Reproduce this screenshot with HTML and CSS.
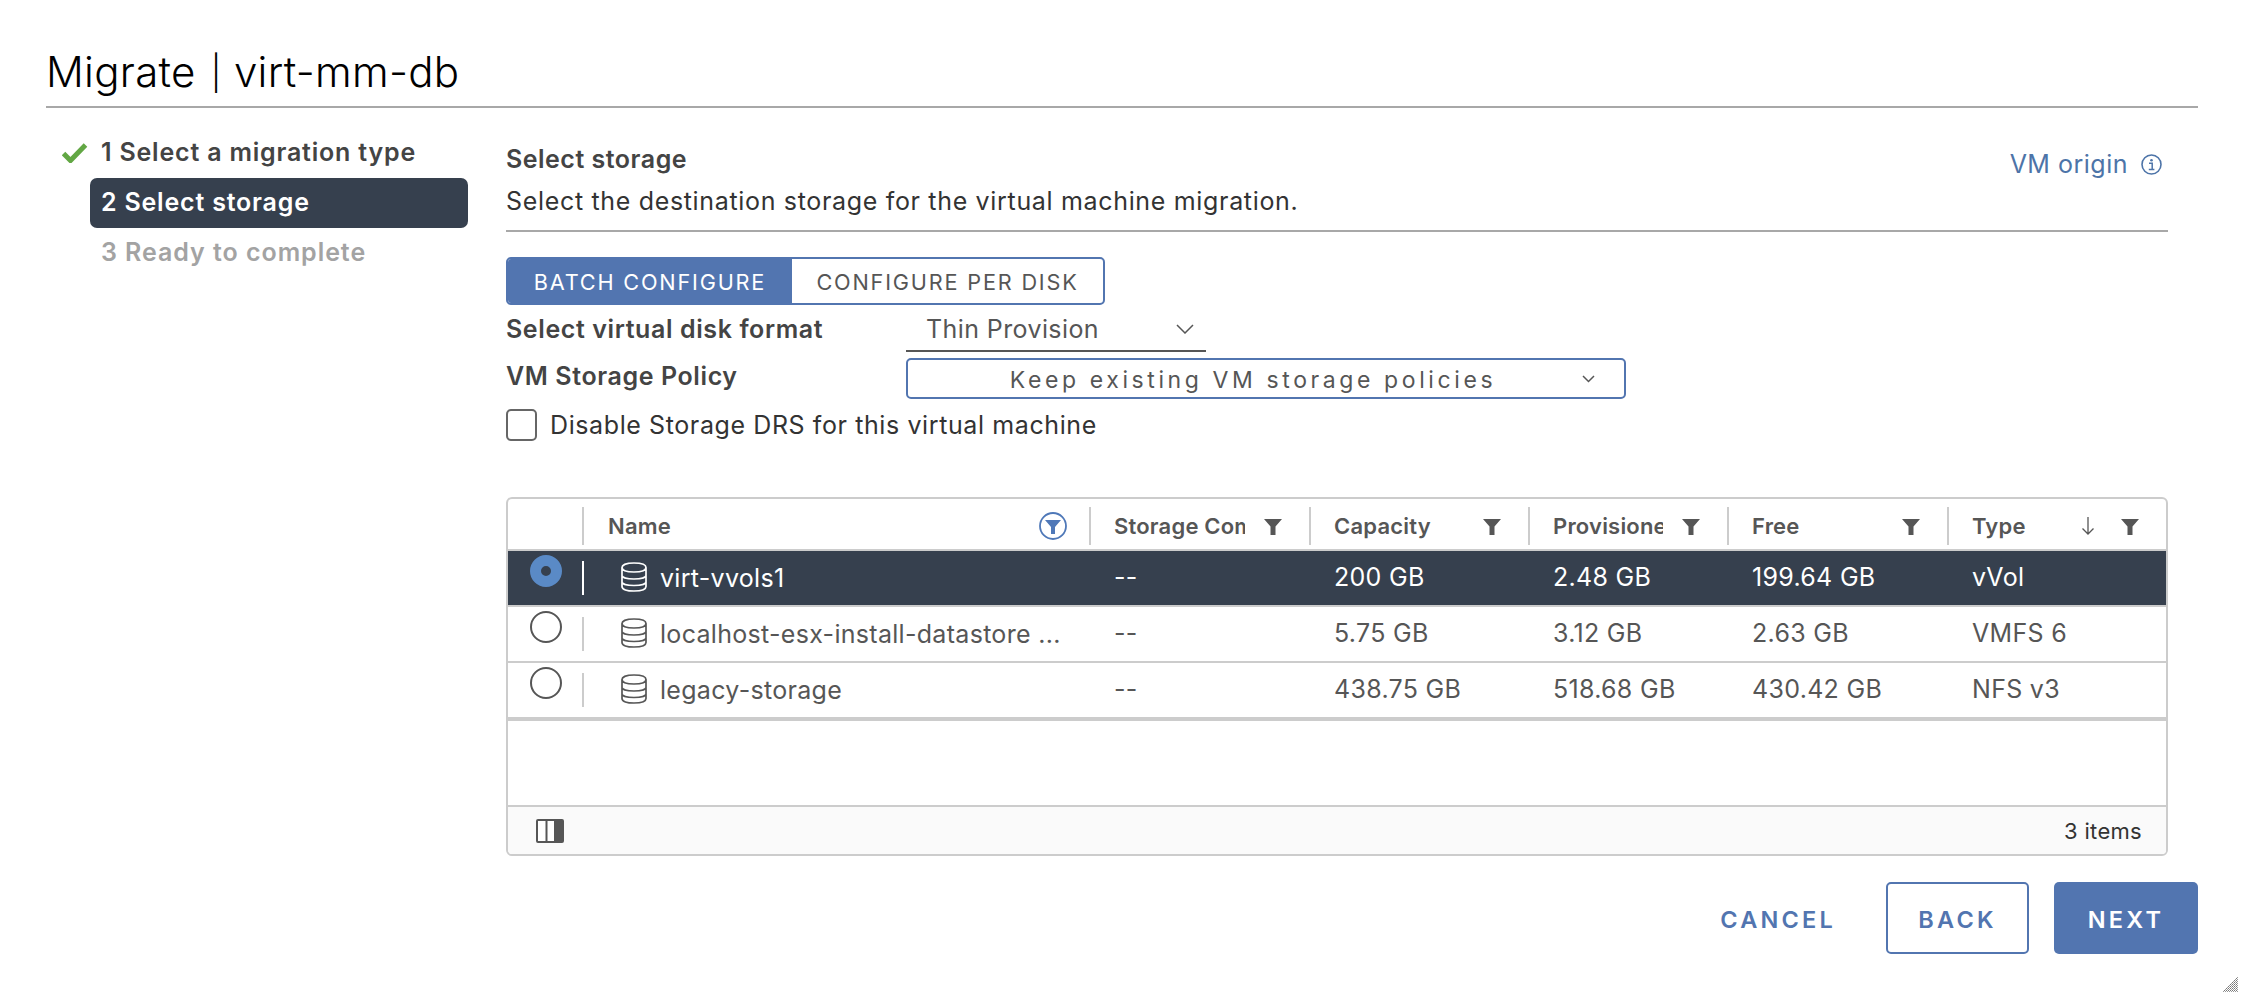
FILE: index.html
```html
<!DOCTYPE html>
<html lang="en">

<head>
    <meta charset="UTF-8">
    <title>Migrate | virt-mm-db</title>
    <link rel="stylesheet" href="styles.css">
</head>

<body>
    <svg class="sprites" width="0" height="0">
        <symbol id="db" viewBox="0 0 26 30">
            <path d="M1 5.5C1 2.5 6 1 13 1s12 1.500 12 4.500v19c0 3-5 4.500-12 4.500S1 27.500 1 24.500z M1 5.500c0 3 5 4.500 12 4.500s12-1.500 12-4.500 M1 13.500c0 2 5 3.500 12 3.500s12-1.500 12-3.500 M1 20c0 2 5 3.500 12 3.500s12-1.500 12-3.500" fill="none" stroke="currentColor" stroke-width="1.700"/>
        </symbol>
        <symbol id="funnel" viewBox="0 0 18 16">
            <path d="M0 0h18l-6.500 7.500V16h-5V7.500z" fill="currentColor"/>
        </symbol>
    </svg>

    <div class="dialog">
        <h1 class="title">Migrate <span class="title-sep">|</span> virt-mm-db</h1>

        <div class="main">
            <!-- steps -->
            <ul class="steps">
                <li class="step done">
                    <svg class="check" width="26" height="20" viewBox="0 0 26 20"><path d="M1.500 10.500l7 7L23.500 2" fill="none" stroke="#62a744" stroke-width="5"/></svg>
                    1 Select a migration type
                </li>
                <li class="step active">2 Select storage</li>
                <li class="step off">3 Ready to complete</li>
            </ul>

            <div class="content">
                <div class="head">
                    <div>
                        <h2 class="head-title">Select storage</h2>
                        <p class="head-desc">Select the destination storage for the virtual machine migration.</p>
                    </div>
                    <a class="origin">VM origin
                        <svg width="21" height="21" viewBox="0 0 21 21"><circle cx="10.500" cy="10.500" r="9.500" fill="none" stroke="currentColor" stroke-width="1.600"/><circle cx="10.500" cy="6.300" r="1.300" fill="currentColor"/><path d="M8 9.300h3.200v6M7.800 15.500h5.600" fill="none" stroke="currentColor" stroke-width="1.500"/></svg>
                    </a>
                </div>

                <div class="toggle">
                    <span class="toggle-btn on">BATCH CONFIGURE</span>
                    <span class="toggle-btn">CONFIGURE PER DISK</span>
                </div>

                <div class="form-row row-format">
                    <label class="form-label">Select virtual disk format</label>
                    <div class="select-line">Thin Provision
                        <svg width="18" height="10" viewBox="0 0 18 10"><path d="M1 1l8 8 8-8" fill="none" stroke="#565656" stroke-width="1.500"/></svg>
                    </div>
                </div>
                <div class="form-row row-policy">
                    <label class="form-label">VM Storage Policy</label>
                    <div class="select-box">Keep existing VM storage policies
                        <svg class="box-chevron" width="13" height="8" viewBox="0 0 13 8"><path d="M1 1l5.500 5.500L12 1" fill="none" stroke="#565656" stroke-width="1.500"/></svg>
                    </div>
                </div>
                <label class="check-row"><span class="checkbox"></span>Disable Storage DRS for this virtual machine</label>

                <!-- datastore table -->
                <div class="grid">
                    <div class="grid-row grid-head">
                        <div class="cell"></div>
                        <div class="cell"><span class="col-name">Name</span>
                            <svg class="filter-on" width="28" height="28" viewBox="0 0 28 28"><circle cx="14" cy="14" r="13" fill="none" stroke="#4f78b8" stroke-width="1.800"/><path d="M6 8h16l-6 7v7h-4v-7z" fill="#4f78b8"/></svg>
                        </div>
                        <div class="cell"><span class="col-name">Storage Compatibility</span><svg class="filter"><use href="#funnel"/></svg></div>
                        <div class="cell"><span class="col-name">Capacity</span><svg class="filter"><use href="#funnel"/></svg></div>
                        <div class="cell"><span class="col-name">Provisioned</span><svg class="filter"><use href="#funnel"/></svg></div>
                        <div class="cell"><span class="col-name">Free</span><svg class="filter"><use href="#funnel"/></svg></div>
                        <div class="cell"><span class="col-name">Type</span>
                            <svg class="sort" width="14" height="20" viewBox="0 0 14 20"><path d="M7 1v17M1.500 12.500L7 18l5.500-5.500" fill="none" stroke="#565656" stroke-width="1.300"/></svg>
                            <svg class="filter"><use href="#funnel"/></svg>
                        </div>
                    </div>

                    <div class="grid-row data selected">
                        <div class="cell radio-cell"><span class="radio"></span></div>
                        <div class="cell name-cell"><svg class="db"><use href="#db"/></svg><span class="name-text">virt-vvols1</span></div>
                        <div class="cell">--</div>
                        <div class="cell">200 GB</div>
                        <div class="cell">2.48 GB</div>
                        <div class="cell">199.64 GB</div>
                        <div class="cell">vVol</div>
                    </div>
                    <div class="grid-row data">
                        <div class="cell radio-cell"><span class="radio"></span></div>
                        <div class="cell name-cell"><svg class="db"><use href="#db"/></svg><span class="name-text">localhost-esx-install-datastore ...</span></div>
                        <div class="cell">--</div>
                        <div class="cell">5.75 GB</div>
                        <div class="cell">3.12 GB</div>
                        <div class="cell">2.63 GB</div>
                        <div class="cell">VMFS 6</div>
                    </div>
                    <div class="grid-row data last">
                        <div class="cell radio-cell"><span class="radio"></span></div>
                        <div class="cell name-cell"><svg class="db"><use href="#db"/></svg><span class="name-text">legacy-storage</span></div>
                        <div class="cell">--</div>
                        <div class="cell">438.75 GB</div>
                        <div class="cell">518.68 GB</div>
                        <div class="cell">430.42 GB</div>
                        <div class="cell">NFS v3</div>
                    </div>

                    <div class="grid-empty"></div>

                    <div class="grid-foot">
                        <svg width="28" height="24" viewBox="0 0 28 24"><rect x="1" y="1" width="26" height="22" rx="1" fill="#fff" stroke="#565656" stroke-width="2"/><path d="M10.500 1v22" stroke="#565656" stroke-width="2"/><rect x="18" y="1" width="9" height="22" fill="#565656"/></svg>
                        <span class="foot-count">3 items</span>
                    </div>
                </div>
            </div>
        </div>

        <div class="actions">
            <span class="btn btn-link">CANCEL</span>
            <span class="btn btn-outline">BACK</span>
            <span class="btn btn-solid">NEXT</span>
        </div>
    </div>

    <svg class="grip" width="16" height="16" viewBox="0 0 16 16">
        <defs>
            <pattern id="dots" width="2" height="2" patternUnits="userSpaceOnUse"><rect width="1" height="1" fill="#777"/><rect x="1" y="1" width="1" height="1" fill="#999"/></pattern>
        </defs>
        <path d="M0 16L16 0v16z" fill="url(#dots)"/>
    </svg>
</body>

</html>
```

FILE: styles.css
```css
* {
    margin: 0;
    padding: 0;
    box-sizing: border-box;
}

html,
body {
    height: 996px;
    overflow: hidden;
}

body {
    position: relative;
    background-color: #fff;
    color: #565656;
    font-family: Inter, "Noto Sans", sans-serif;
    font-size: 25px;
    letter-spacing: 0.3px;
}

.sprites {
    position: absolute;
}

.dialog {
    padding: 0 46px;
}

/* title */
.title {
    height: 108px;
    padding-top: 43px;
    border-bottom: 2px solid #a8a8a8;
    color: #000;
    font-size: 42px;
    font-weight: 300;
    letter-spacing: 0.3px;
    line-height: 58px;
}

.title-sep {
    margin-left: 3px;
    font-size: 34px;
    vertical-align: 2px;
}

.main {
    display: flex;
    height: 774px;
}

/* left steps */
.steps {
    flex: none;
    width: 378px;
    margin: 20px 38px 0 44px;
    list-style: none;
    letter-spacing: 0.8px;
}

.step {
    position: relative;
    height: 50px;
    padding-left: 11px;
    border-radius: 7px;
    font-weight: 600;
    line-height: 48px;
    white-space: nowrap;
}

.step.done {
    margin-top: -1px;
    color: #444;
    line-height: 50px;
}

.step.active {
    margin-top: 1px;
    background-color: #36404e;
    color: #fff;
}

.step.off {
    color: #a3a3a3;
    letter-spacing: 0.95px;
}

.check {
    position: absolute;
    left: -28px;
    top: 16px;
}

/* right content */
.content {
    flex: 1;
    padding-right: 30px;
}

.head {
    display: flex;
    justify-content: space-between;
    height: 124px;
    padding-top: 32px;
    border-bottom: 2px solid #a8a8a8;
}

.head-title {
    color: #444;
    font-size: 25px;
    font-weight: 600;
    letter-spacing: 0.5px;
    line-height: 38px;
}

.head-desc {
    margin-top: 4px;
    color: #333;
    letter-spacing: 0.67px;
    line-height: 38px;
}

.origin {
    display: flex;
    align-items: center;
    gap: 13px;
    height: 48px;
    margin-right: 6px;
    color: #4d74a8;
    letter-spacing: 0.5px;
}

.toggle {
    display: flex;
    width: 599px;
    height: 48px;
    margin-top: 25px;
    border: 2px solid #5275b0;
    border-radius: 5px;
    overflow: hidden;
}

.toggle-btn {
    display: flex;
    align-items: center;
    justify-content: center;
    flex: 1;
    padding-top: 2px;
    font-size: 21.700px;
    letter-spacing: 1.800px;
}

.toggle-btn.on {
    flex: none;
    width: 284px;
    background-color: #5275b0;
    color: #fff;
}

.form-row {
    display: flex;
}

.form-label {
    width: 400px;
    color: #444;
    font-weight: 600;
    letter-spacing: 0.6px;
}

.row-format {
    align-items: center;
    height: 47px;
}

.select-line {
    display: flex;
    align-items: center;
    justify-content: space-between;
    width: 300px;
    height: 47px;
    padding: 2px 12px 0 20px;
    border-bottom: 2px solid #565656;
    letter-spacing: 0.4px;
}

.row-policy {
    align-items: flex-start;
    height: 48px;
    padding-top: 6px;
}

.row-policy .form-label {
    line-height: 37px;
}

.select-box {
    position: relative;
    width: 720px;
    height: 41px;
    padding-right: 26px;
    border: 2px solid #5275b0;
    border-radius: 5px;
    font-size: 23px;
    letter-spacing: 3.600px;
    line-height: 41px;
    text-align: center;
}

.box-chevron {
    position: absolute;
    right: 29px;
    top: 15px;
}

.check-row {
    display: flex;
    align-items: center;
    gap: 13px;
    height: 32px;
    margin-top: 9px;
    color: #333;
    letter-spacing: 0.6px;
}

.checkbox {
    width: 31px;
    height: 32px;
    border: 2px solid #666;
    border-radius: 5px;
}

/* table */
.grid {
    margin-top: 56px;
    border: 2px solid #ccc;
    border-radius: 6px;
    overflow: hidden;
}

.grid-row {
    display: grid;
    grid-template-columns: 74px 507px 220px 219px 199px 220px 1fr;
}

.grid-head {
    height: 52px;
    border-bottom: 2px solid #ccc;
    font-size: 22px;
    font-weight: 600;
    letter-spacing: 0.2px;
}

.grid-head .cell {
    display: flex;
    align-items: center;
    margin-top: 8px;
    height: 38px;
    padding-left: 23px;
    border-left: 2px solid #ccc;
}

.grid-head .cell:first-child {
    border-left: 0;
}

.grid-head .cell:nth-child(2) {
    padding-left: 24px;
}

.col-name {
    flex: 1;
    overflow: hidden;
    white-space: nowrap;
}

.filter {
    flex: none;
    width: 18px;
    height: 16px;
    margin: 2px 27px 0 19px;
    color: #565656;
}

.filter-on {
    flex: none;
    margin-right: 22px;
}

.sort {
    flex: none;
    margin-right: 26px;
}

.grid-head .sort + .filter {
    margin-left: 0;
}

.cell {
    display: flex;
    align-items: center;
    padding-left: 25px;
}

.data {
    height: 56px;
    padding-bottom: 2px;
    border-bottom: 2px solid #ccc;
}

.data.last {
    height: 58px;
    border-bottom-width: 4px;
}

.selected {
    background-color: #36404e;
    color: #fff;
}

.radio-cell {
    position: relative;
    padding-left: 22px;
}

.radio-cell::after {
    content: "";
    position: absolute;
    right: -2px;
    top: 10px;
    width: 2px;
    height: 34px;
    background-color: #ccc;
}

.selected .radio-cell::after {
    background-color: #fff;
}

.radio {
    width: 32px;
    height: 32px;
    margin-top: -12px;
    border: 2px solid #565656;
    border-radius: 50%;
    background-color: #fff;
}

.selected .radio {
    border: 11px solid #5a8ac6;
    background-color: #36404e;
}

.name-cell {
    padding-left: 39px;
}

.db {
    flex: none;
    width: 26px;
    height: 30px;
    margin-right: 13px;
}

.name-text {
    margin-top: 2px;
    white-space: nowrap;
}

.grid-empty {
    height: 86px;
    border-bottom: 2px solid #ccc;
}

.grid-foot {
    display: flex;
    align-items: center;
    justify-content: space-between;
    height: 47px;
    padding: 0 24px 0 28px;
    background-color: #fafafa;
    color: #333;
}

.foot-count {
    font-size: 22px;
}

/* bottom buttons */
.actions {
    display: flex;
    justify-content: flex-end;
}

.btn {
    display: flex;
    align-items: center;
    justify-content: center;
    height: 72px;
    padding-top: 3px;
    border-radius: 5px;
    font-size: 23.500px;
    font-weight: 600;
    letter-spacing: 3.200px;
}

.btn-link {
    margin-right: 50px;
    color: #5275b0;
}

.btn-outline {
    width: 143px;
    margin-right: 25px;
    border: 2px solid #5275b0;
    color: #5275b0;
}

.btn-solid {
    width: 144px;
    background-color: #5275b0;
    color: #fff;
}

.grip {
    position: absolute;
    right: 6px;
    bottom: 4px;
}
```
